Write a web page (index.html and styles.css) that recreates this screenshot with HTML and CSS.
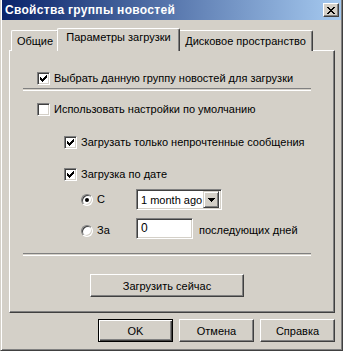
FILE: index.html
```html
<!DOCTYPE html>
<html lang="ru">
<head>
  <meta charset="UTF-8" />
  <title>Свойства группы новостей</title>
  <link rel="stylesheet" href="styles.css">
</head>
<body>
  <div class="window">
    <div class="titlebar">
      <span class="title">Свойства группы новостей</span>
      <span class="close">
        <svg width="8" height="7" viewBox="0 0 8 7" shape-rendering="crispEdges">
          <path d="M0 0h2v1H0zM6 0h2v1H6zM1 1h2v1H1zM5 1h2v1H5zM2 2h4v1H2zM3 3h2v1H3zM2 4h4v1H2zM1 5h2v1H1zM5 5h2v1H5zM0 6h2v1H0zM6 6h2v1H6z" fill="#000"/>
        </svg>
      </span>
    </div>

    <div class="dialog">
      <div class="tabs">
        <div class="tab tab-general">Общие</div>
        <div class="tab active">Параметры загрузки</div>
        <div class="tab tab-disk">Дисковое пространство</div>
      </div>

      <div class="panel">
        <div class="row row-select">
          <span class="check on"><svg width="7" height="7" viewBox="0 0 7 7" shape-rendering="crispEdges"><path d="M0 2h1v3H0zM1 3h1v3H1zM2 4h1v3H2zM3 3h1v3H3zM4 2h1v3H4zM5 1h1v3H5zM6 0h1v3H6z" fill="#000"/></svg></span>
          <span class="label">Выбрать данную группу новостей для загрузки</span>
        </div>
        <div class="sep sep-top"></div>

        <div class="row row-default">
          <span class="check"></span>
          <span class="label">Использовать настройки по умолчанию</span>
        </div>

        <div class="row row-unread">
          <span class="check on"><svg width="7" height="7" viewBox="0 0 7 7" shape-rendering="crispEdges"><path d="M0 2h1v3H0zM1 3h1v3H1zM2 4h1v3H2zM3 3h1v3H3zM4 2h1v3H4zM5 1h1v3H5zM6 0h1v3H6z" fill="#000"/></svg></span>
          <span class="label">Загрузать только непрочтенные сообщения</span>
        </div>

        <div class="row row-bydate">
          <span class="check on"><svg width="7" height="7" viewBox="0 0 7 7" shape-rendering="crispEdges"><path d="M0 2h1v3H0zM1 3h1v3H1zM2 4h1v3H2zM3 3h1v3H3zM4 2h1v3H4zM5 1h1v3H5zM6 0h1v3H6z" fill="#000"/></svg></span>
          <span class="label">Загрузка по дате</span>
        </div>

        <div class="row row-since">
          <span class="radio on"></span>
          <span class="label radio-label">С</span>
          <div class="combo">
            <span class="combo-text">1 month ago</span>
            <span class="combo-btn">
              <svg width="7" height="4" viewBox="0 0 7 4" shape-rendering="crispEdges"><path d="M0 0h7v1H0zM1 1h5v1H1zM2 2h3v1H2zM3 3h1v1H3z" fill="#000"/></svg>
            </span>
          </div>
        </div>

        <div class="row row-days">
          <span class="radio"></span>
          <span class="label radio-label">За</span>
          <div class="edit">0</div>
          <span class="label days-label">последующих дней</span>
        </div>

        <div class="sep sep-bottom"></div>

        <button class="btn btn-now">Загрузить сейчас</button>
      </div>

      <div class="buttons">
        <button class="btn default">OK</button>
        <button class="btn">Отмена</button>
        <button class="btn">Справка</button>
      </div>
    </div>
  </div>
</body>
</html>
```

FILE: styles.css
```css
body {
  margin: 0;
  background-color: #d4d0c8;
  font-family: 'Liberation Sans', Arial, sans-serif;
  font-size: 11px;
  color: #000;
}
.window {
  width: 343px;
  height: 351px;
  box-sizing: border-box;
  background-color: #d4d0c8;
  border-left: 1px solid #d4d0c8;
  border-right: 1px solid #404040;
  border-bottom: 1px solid #404040;
  padding: 0 1px;
  box-shadow: inset 1px 0 0 #fff, inset -1px -1px 0 #808080;
}
.titlebar {
  height: 20px;
  display: flex;
  align-items: center;
  justify-content: space-between;
  padding-left: 3px;
  padding-right: 2px;
  background: linear-gradient(to right, #0a246a, #a6caf0);
}
.title {
  color: #fff;
  font-weight: bold;
  font-size: 12px;
  letter-spacing: 0.3px;
}
.close {
  width: 16px;
  height: 14px;
  box-sizing: border-box;
  display: flex;
  align-items: center;
  justify-content: center;
  background-color: #d4d0c8;
  border-top: 1px solid #fff;
  border-left: 1px solid #fff;
  border-right: 1px solid #404040;
  border-bottom: 1px solid #404040;
  box-shadow: inset -1px -1px 0 #808080;
}
.dialog {
  padding: 8px 6px 0 7px;
}
.tabs {
  height: 23px;
  margin-bottom: -1px;
  padding-left: 2px;
  display: flex;
  align-items: flex-end;
}
.tab {
  height: 21px;
  box-sizing: border-box;
  padding-top: 3px;
  line-height: 14px;
  text-align: center;
  white-space: nowrap;
  background-color: #d4d0c8;
  border-top: 1px solid #fff;
  border-left: 1px solid #fff;
  border-right: 1px solid #404040;
  border-radius: 2px 2px 0 0;
  box-shadow: inset -1px 0 0 #808080;
}
.tab-general {
  width: 48px;
}
.tab.active {
  position: relative;
  z-index: 1;
  width: 123px;
  height: 23px;
  margin: 0 -2px;
  padding-top: 1px;
}
.tab-disk {
  width: 135px;
}
.panel {
  width: 326px;
  height: 263px;
  box-sizing: border-box;
  border-top: 1px solid #fff;
  border-left: 1px solid #fff;
  border-right: 1px solid #404040;
  border-bottom: 1px solid #404040;
  box-shadow: inset -1px -1px 0 #808080;
}
.row {
  display: flex;
  align-items: center;
  height: 13px;
}
.label {
  line-height: 13px;
  white-space: nowrap;
}
.check {
  width: 13px;
  height: 13px;
  box-sizing: border-box;
  margin-right: 4px;
  display: flex;
  align-items: center;
  justify-content: center;
  background-color: #fff;
  border-top: 1px solid #808080;
  border-left: 1px solid #808080;
  border-right: 1px solid #fff;
  border-bottom: 1px solid #fff;
  box-shadow: inset 1px 1px 0 #404040, inset -1px -1px 0 #d4d0c8;
}
.row-select {
  margin: 21px 0 0 27px;
}
.sep {
  width: 288px;
  height: 1px;
  margin-left: 13px;
  border-top: 1px solid #808080;
  border-bottom: 1px solid #fff;
}
.sep-top {
  margin-top: 3px;
}
.row-default {
  margin: 12px 0 0 27px;
}
.row-unread {
  margin: 20px 0 0 54px;
}
.row-bydate {
  margin: 19px 0 0 54px;
}
.row-since,
.row-days {
  height: 21px;
  align-items: flex-start;
  margin: 8px 0 0 71px;
}
.radio {
  width: 12px;
  height: 12px;
  box-sizing: border-box;
  border-radius: 50%;
  background-color: #fff;
  border-top: 1px solid #808080;
  border-left: 1px solid #808080;
  border-right: 1px solid #fff;
  border-bottom: 1px solid #fff;
  box-shadow: inset 1px 1px 0 #404040, inset -1px -1px 0 #d4d0c8;
  display: flex;
  align-items: center;
  justify-content: center;
}
.radio.on::after {
  content: "";
  width: 4px;
  height: 4px;
  border-radius: 50%;
  background-color: #000;
}
.row-since .radio {
  margin-top: 5px;
}
.row-days .radio {
  margin-top: 7px;
}
.radio-label {
  width: 39px;
  margin-left: 4px;
}
.row-since .radio-label {
  margin-top: 4px;
}
.row-days .radio-label,
.days-label {
  margin-top: 6px;
}
.combo,
.edit {
  height: 21px;
  box-sizing: border-box;
  background-color: #fff;
  border-top: 1px solid #808080;
  border-left: 1px solid #808080;
  border-right: 1px solid #fff;
  border-bottom: 1px solid #fff;
  box-shadow: inset 1px 1px 0 #404040, inset -1px -1px 0 #d4d0c8;
}
.combo {
  width: 86px;
  display: flex;
  align-items: center;
  padding: 2px;
}
.combo-text {
  flex: 1;
  padding-left: 2px;
  font-size: 11px;
  white-space: nowrap;
}
.combo-btn {
  width: 16px;
  height: 17px;
  flex: none;
  box-sizing: border-box;
  display: flex;
  align-items: center;
  justify-content: center;
  background-color: #d4d0c8;
  border-top: 1px solid #d4d0c8;
  border-left: 1px solid #d4d0c8;
  border-right: 1px solid #404040;
  border-bottom: 1px solid #404040;
  box-shadow: inset 1px 1px 0 #fff, inset -1px -1px 0 #808080;
}
.edit {
  width: 57px;
  padding: 2px 4px;
  font-size: 12px;
  line-height: 15px;
}
.days-label {
  margin-left: 6px;
}
.sep-bottom {
  margin-top: 14px;
}
.btn {
  display: block;
  width: 75px;
  height: 23px;
  padding: 0;
  font-family: 'Liberation Sans', Arial, sans-serif;
  font-size: 11px;
  font-weight: normal;
  color: #000;
  background-color: #d4d0c8;
  border-top: 1px solid #fff;
  border-left: 1px solid #fff;
  border-right: 1px solid #404040;
  border-bottom: 1px solid #404040;
  box-shadow: inset -1px -1px 0 #808080;
}
.btn-now {
  width: 154px;
  margin: 18px 0 0 80px;
}
.btn.default {
  border: 1px solid #000;
  box-shadow: inset 1px 1px 0 #fff, inset -1px -1px 0 #404040, inset -2px -2px 0 #808080;
}
.buttons {
  width: 326px;
  display: flex;
  justify-content: flex-end;
  gap: 6px;
  margin-top: 6px;
}
```
